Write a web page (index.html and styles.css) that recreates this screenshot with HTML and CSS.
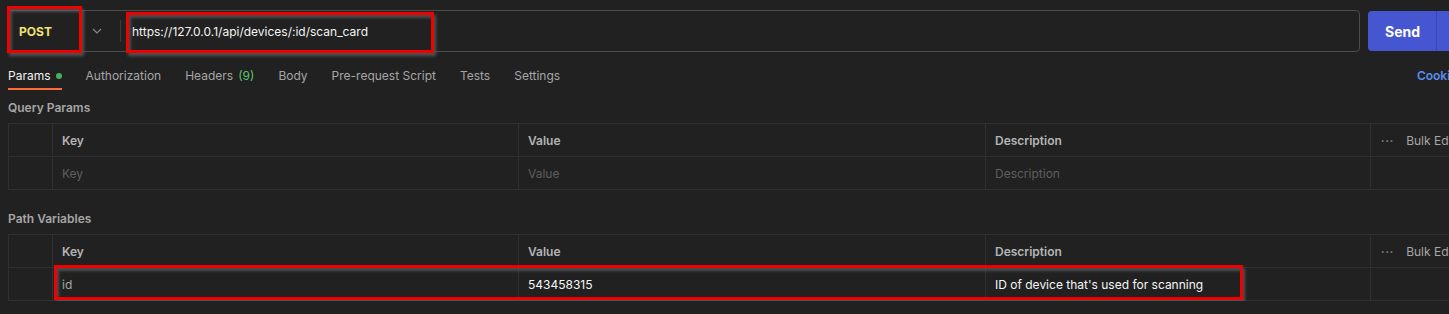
FILE: index.html
```html
<!DOCTYPE html>
<html lang="en">
<head>
  <meta charset="UTF-8">
  <meta name="viewport" content="width=device-width, initial-scale=1.0">
  <title>POST scan_card</title>
  <link rel="stylesheet" href="styles.css">
</head>
<body>
  <div class="page">
    <div class="request-bar">
      <div class="url-box">
        <div class="method">POST</div>
        <span class="method-caret">
          <svg width="10" height="6" viewBox="0 0 10 6"><path d="M1 1l4 4 4-4" fill="none" stroke="#8a8a8a" stroke-width="1.1"/></svg>
        </span>
        <span class="url-divider"></span>
        <div class="url-text">https://127.0.0.1/api/devices/:id/scan_card</div>
        <!-- annotation marks -->
        <span class="mark mark-method"></span>
        <span class="mark mark-url"></span>
      </div>
      <div class="send-btn">
        <span class="send-label">Send</span>
        <span class="send-caret">
          <svg width="10" height="6" viewBox="0 0 10 6"><path d="M1 1l4 4 4-4" fill="none" stroke="#fff" stroke-width="1.4"/></svg>
        </span>
      </div>
    </div>

    <div class="tabs">
      <div class="tab active">Params <span class="dot"></span></div>
      <div class="tab">Authorization</div>
      <div class="tab">Headers <span class="count">(9)</span></div>
      <div class="tab">Body</div>
      <div class="tab">Pre-request Script</div>
      <div class="tab">Tests</div>
      <div class="tab">Settings</div>
      <div class="tab tab-link">Cookies</div>
    </div>

    <div class="section-title">Query Params</div>
    <div class="param-table">
      <div class="cell"></div>
      <div class="cell head">Key</div>
      <div class="cell head">Value</div>
      <div class="cell head">Description</div>
      <div class="cell bulk"><span class="more">&bull;&bull;&bull;</span>Bulk Edit</div>

      <div class="cell"></div>
      <div class="cell placeholder">Key</div>
      <div class="cell placeholder">Value</div>
      <div class="cell placeholder">Description</div>
      <div class="cell"></div>
    </div>

    <div class="section-title second">Path Variables</div>
    <div class="param-table">
      <div class="cell"></div>
      <div class="cell head">Key</div>
      <div class="cell head">Value</div>
      <div class="cell head">Description</div>
      <div class="cell bulk"><span class="more">&bull;&bull;&bull;</span>Bulk Edit</div>

      <div class="cell"></div>
      <div class="cell key">id</div>
      <div class="cell filled">543458315</div>
      <div class="cell filled">ID of device that's used for scanning</div>
      <div class="cell"></div>

      <span class="mark mark-row"></span>
    </div>
  </div>
</body>
</html>
```

FILE: styles.css
```css
:root {
  --bg: #212121;
  --line: #303030;
  --muted: #a6a6a6;
  --faint: #5e5e5e;
  --orange: #ff6c37;
  --green: #5fc26d;
  --blue: #5b8def;
  --send: #4656d1;
  --mark: #f00000;
}

html, body {
  margin: 0;
  background-color: var(--bg);
  overflow: hidden;
}

body {
  font-family: 'Inter', 'Noto Sans', sans-serif;
  color: var(--muted);
  font-size: 12px;
}

.page {
  width: 1500px;
  padding-left: 8px;
}

/* request bar */
.request-bar {
  display: flex;
  gap: 8px;
  padding-top: 10px;
}

.url-box {
  position: relative;
  width: 1352px;
  height: 42px;
  box-sizing: border-box;
  border: 1px solid #4c4c4c;
  border-radius: 4px;
  display: flex;
  align-items: center;
}

.method {
  width: 72px;
  padding-left: 10px;
  font-weight: 700;
  font-size: 12px;
  color: #f2e36d;
}

.method-caret {
  display: flex;
  margin-left: 1px;
}

.url-divider {
  width: 1px;
  height: 22px;
  background-color: #3c3c3c;
  margin-left: 18px;
  margin-right: 11px;
}

.url-text {
  color: #f4f4f4;
  font-size: 12px;
}

.send-btn {
  display: flex;
  align-items: stretch;
  height: 40px;
  margin-top: 1px;
  background-color: var(--send);
  border-radius: 4px;
  color: #fff;
  font-weight: 700;
  font-size: 14px;
}

.send-label {
  display: flex;
  align-items: center;
  padding: 0 16px 0 17px;
  border-right: 1px solid #3a48b2;
}

.send-caret {
  display: flex;
  align-items: center;
  padding: 0 12px;
}

/* tabs */
.tabs {
  display: flex;
  gap: 24px;
  width: 1456px;
  margin-top: 8px;
}

.tab {
  padding: 8px 0 4px;
  line-height: 16px;
  border-bottom: 2px solid transparent;
  display: flex;
  align-items: center;
  gap: 5px;
  white-space: nowrap;
}

.tab.active {
  color: #f2f2f2;
  border-bottom-color: var(--orange);
}

.dot {
  width: 6px;
  height: 6px;
  border-radius: 50%;
  background-color: #45b35e;
}

.count {
  color: var(--green);
}

.tab-link {
  margin-left: auto;
  color: var(--blue);
  font-weight: 600;
}

/* param tables */
.section-title {
  font-size: 12px;
  font-weight: 600;
  line-height: 16px;
  margin-top: 10px;
  margin-bottom: 7px;
}

.section-title.second {
  margin-top: 21px;
}

.param-table {
  position: relative;
  display: grid;
  grid-template-columns: 44px 466px 467px 385px 1fr;
  grid-auto-rows: 33px;
  border-top: 1px solid var(--line);
  border-left: 1px solid var(--line);
}

.cell {
  display: flex;
  align-items: center;
  padding-left: 9px;
  box-sizing: border-box;
  border-right: 1px solid var(--line);
  border-bottom: 1px solid var(--line);
  font-size: 12px;
  white-space: nowrap;
}

.cell:nth-child(5n) {
  border-right: none;
}

.head {
  font-weight: 600;
  color: #b5b5b5;
}

.placeholder {
  color: var(--faint);
}

.key {
  color: var(--muted);
}

.filled {
  color: #f6f6f6;
}

.bulk {
  padding-left: 10px;
  color: var(--muted);
}

.more {
  font-size: 6px;
  letter-spacing: 1px;
  color: #8a8a8a;
  margin-right: 12px;
}

/* red annotation rectangles */
.mark {
  position: absolute;
  border: 3px solid var(--mark);
  box-sizing: border-box;
  box-shadow: 2px 3px 3px rgba(95, 95, 95, 0.8), inset 2px 3px 3px rgba(95, 95, 95, 0.7);
  pointer-events: none;
}

.mark-method {
  left: -2px;
  top: -5px;
  width: 75px;
  height: 47px;
}

.mark-url {
  left: 117px;
  top: 1px;
  width: 308px;
  height: 41px;
}

.mark-row {
  left: 45px;
  top: 30px;
  width: 1189px;
  height: 35px;
}
```
